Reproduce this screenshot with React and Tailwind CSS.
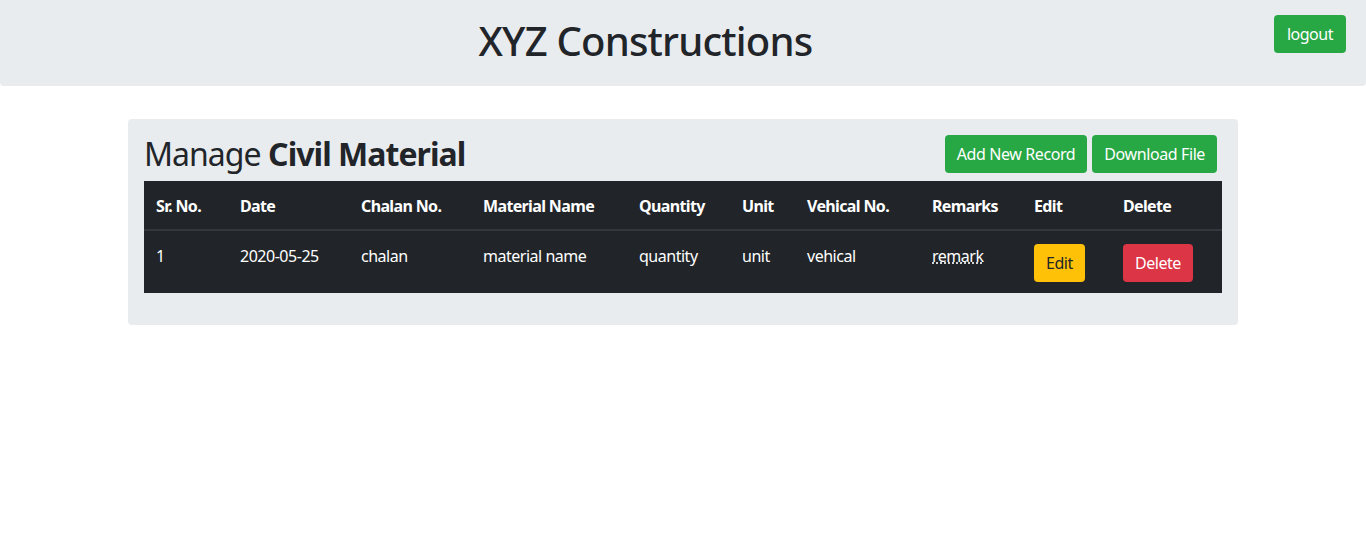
import React from 'react';

const columns = [
  { label: 'Sr. No.', w: 'w-[84px]' },
  { label: 'Date', w: 'w-[121px]' },
  { label: 'Chalan No.', w: 'w-[122px]' },
  { label: 'Material Name', w: 'w-[156px]' },
  { label: 'Quantity', w: 'w-[103px]' },
  { label: 'Unit', w: 'w-[65px]' },
  { label: 'Vehical No.', w: 'w-[125px]' },
  { label: 'Remarks', w: 'w-[102px]' },
  { label: 'Edit', w: 'w-[89px]' },
  { label: 'Delete', w: 'w-[111px]' },
];

const records = [
  {
    id: 1,
    date: '2020-05-25',
    chalan: 'chalan',
    material: 'material name',
    quantity: 'quantity',
    unit: 'unit',
    vehical: 'vehical',
    remark: 'remark',
  },
];

export default function App() {
  return (
    <div className="min-h-[544px] bg-white text-[#212529] font-['Noto_Sans',sans-serif] text-base leading-6 tracking-[-0.03em]">
      {/* Header */}
      <div className="h-[86px] bg-[#e9ecef] rounded-b-[4px] flex items-start">
        <h1 className="flex-1 pl-[17px] text-center text-[40px] leading-[48px] font-medium tracking-[-0.02em] mt-[17px]">
          XYZ Constructions
        </h1>
        <button className="shrink-0 mt-[15px] mr-[20px] h-[38px] px-[13px] rounded bg-[#28a745] text-white text-base">
          logout
        </button>
      </div>

      {/* Card */}
      <div className="w-[1110px] mx-auto mt-[33px] bg-[#e9ecef] rounded p-4">
        <div className="flex items-start justify-between mb-2">
          <h2 className="text-[32px] leading-[38px] font-normal tracking-[-0.03em]">
            Manage <b className="font-bold">Civil Material</b>
          </h2>
          <div className="flex gap-[5px] mr-[5px]">
            <button className="h-[38px] px-3 rounded bg-[#28a745] text-white tracking-[-0.025em]">Add New Record</button>
            <button className="h-[38px] px-3 rounded bg-[#28a745] text-white tracking-[-0.025em]">Download File</button>
          </div>
        </div>

        <table className="w-full bg-[#212529] text-white border-collapse table-fixed mb-4">
          <thead>
            <tr>
              {columns.map((c) => (
                <th
                  key={c.label}
                  className={`${c.w} px-3 pt-[13px] pb-[11px] text-left font-bold tracking-[-0.04em] border-b-2 border-[#32383e] align-bottom`}
                >
                  {c.label}
                </th>
              ))}
            </tr>
          </thead>
          <tbody>
            {records.map((r) => (
              <tr key={r.id}>
                <td className="px-3 pt-[13px] pb-[11px] align-top">{r.id}</td>
                <td className="px-3 pt-[13px] pb-[11px] align-top">{r.date}</td>
                <td className="px-3 pt-[13px] pb-[11px] align-top">{r.chalan}</td>
                <td className="px-3 pt-[13px] pb-[11px] align-top">{r.material}</td>
                <td className="px-3 pt-[13px] pb-[11px] align-top">{r.quantity}</td>
                <td className="px-3 pt-[13px] pb-[11px] align-top">{r.unit}</td>
                <td className="px-3 pt-[13px] pb-[11px] align-top">{r.vehical}</td>
                <td className="px-3 pt-[13px] pb-[11px] align-top">
                  <abbr title={r.remark} className="underline decoration-dotted">{r.remark}</abbr>
                </td>
                <td className="px-3 pt-[13px] pb-[11px] align-top">
                  <button className="h-[38px] px-3 rounded bg-[#ffc107] text-[#212529]">Edit</button>
                </td>
                <td className="px-3 pt-[13px] pb-[11px] align-top">
                  <button className="h-[38px] px-3 rounded bg-[#dc3545] text-white">Delete</button>
                </td>
              </tr>
            ))}
          </tbody>
        </table>
      </div>
    </div>
  );
}
